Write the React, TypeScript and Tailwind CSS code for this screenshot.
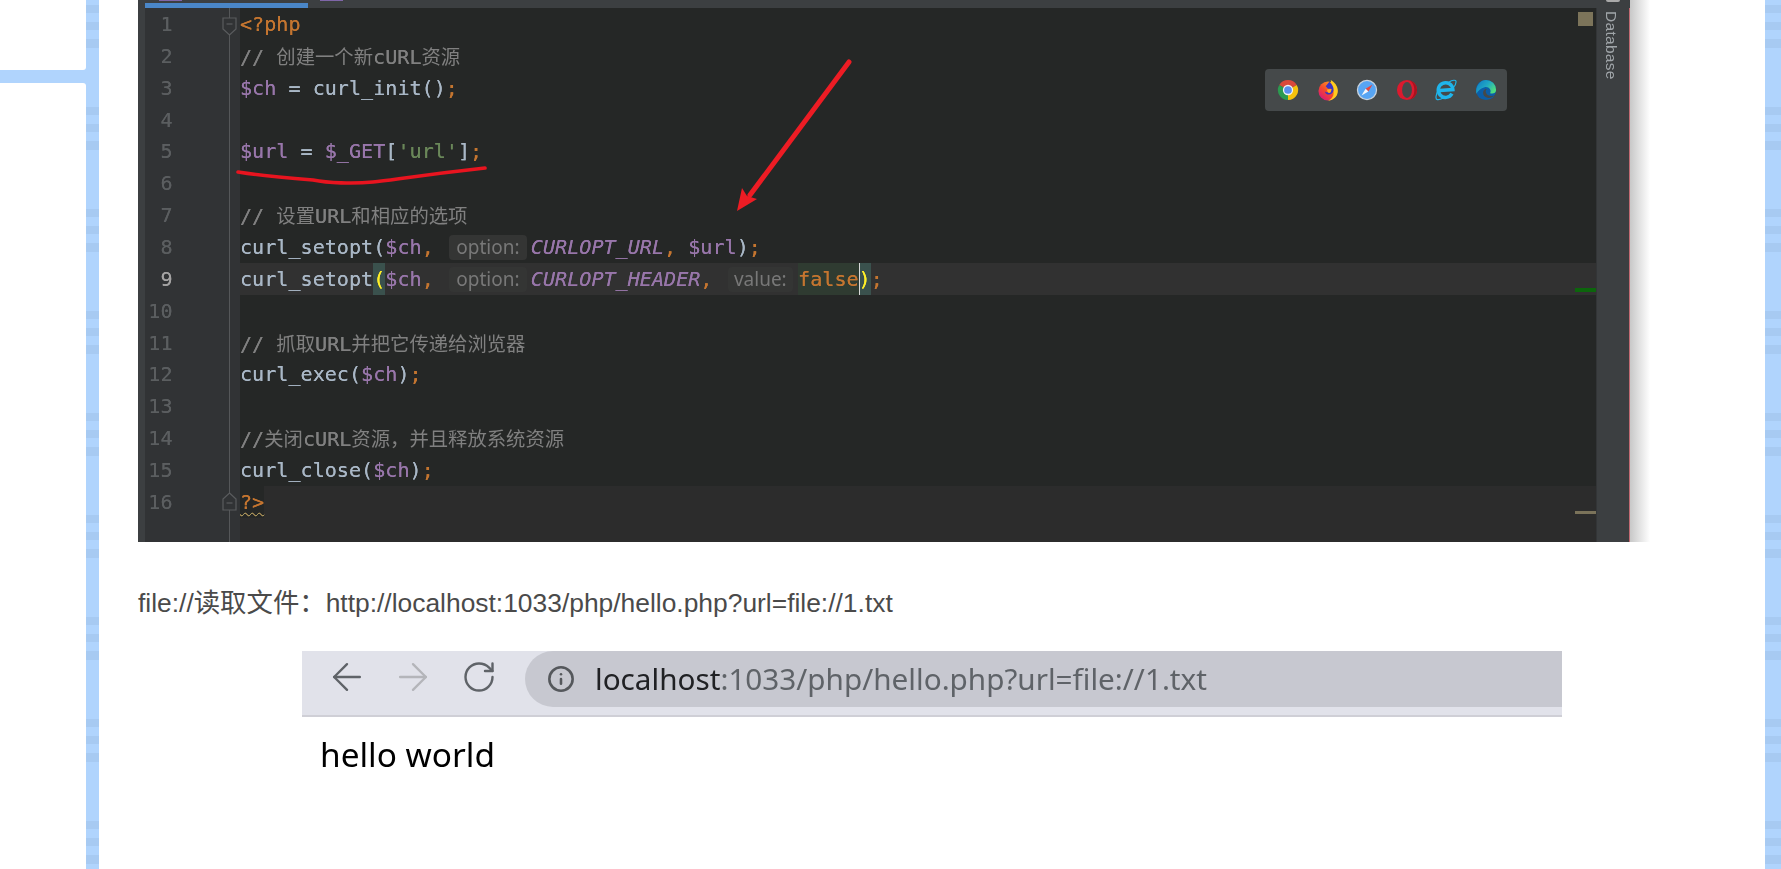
import { ArrowLeft, ArrowRight, RotateCw, Info } from "lucide-react";
import type { ReactNode } from "react";

const stripe =
  "bg-[#b0d4fd] bg-[linear-gradient(to_bottom,#a7caf2_0,#a7caf2_8px,transparent_8px,transparent_17px,#a7caf2_17px,#a7caf2_25px,transparent_25px,transparent_34px,#a7caf2_34px,#a7caf2_43px,transparent_43px)] bg-[length:100%_102px] bg-[position:0_5px]";

const V = ({ children }: { children: ReactNode }) => <span className="text-[#9876aa]">{children}</span>;
const O = ({ children }: { children: ReactNode }) => <span className="text-[#c47530]">{children}</span>;
const C = ({ children }: { children: ReactNode }) => <span className="text-[#808080]">{children}</span>;
const Z = ({ children }: { children: ReactNode }) => (
  <span className="text-[#808080] text-[19.35px] font-['Noto_Sans_CJK_SC',sans-serif] [text-shadow:none]">{children}</span>
);
const K = ({ children }: { children: ReactNode }) => <span className="text-[#9876aa] italic">{children}</span>;
const Hint = ({ w, ml, mr, children }: { w: string; ml: string; mr: string; children: ReactNode }) => (
  <span
    className={`inline-block h-[25px] align-top mt-[4px] rounded-[4px] bg-[#343534] text-[#787878] text-[19px] leading-[25px] text-center font-['Noto_Sans',sans-serif] [text-shadow:none] ${w} ${ml} ${mr}`}
  >
    {children}
  </span>
);

const lines: { code: ReactNode; kind?: "cur" | "end" }[] = [
  { code: <O>{"<?php"}</O> },
  { code: <><C>{"// "}</C><Z>创建一个新</Z><C>cURL</C><Z>资源</Z></> },
  { code: <><V>$ch</V> = curl_init()<O>;</O></> },
  { code: "" },
  { code: <><V>$url</V> = <V>$_GET</V>[<span className="text-[#6a8759]">'url'</span>]<O>;</O></> },
  { code: "" },
  { code: <><C>{"// "}</C><Z>设置</Z><C>URL</C><Z>和相应的选项</Z></> },
  {
    code: (
      <>
        curl_setopt(<V>$ch</V><O>,</O>{" "}
        <Hint w="w-[78px]" ml="ml-[3px]" mr="mr-[4px]">option:</Hint>
        <K>CURLOPT_URL</K><O>,</O> <V>$url</V>)<O>;</O>
      </>
    ),
  },
  {
    kind: "cur",
    code: (
      <>
        curl_setopt
        <span className="inline-block align-top h-[31.87px] bg-[#3a514d] text-[#ffef28]">(</span>
        <V>$ch</V><O>,</O>{" "}
        <Hint w="w-[78px]" ml="ml-[3px]" mr="mr-[4px]">option:</Hint>
        <K>CURLOPT_HEADER</K><O>,</O>{" "}
        <Hint w="w-[64.5px]" ml="ml-[3.5px]" mr="mr-[5.5px]">value:</Hint>
        <span className="inline-block align-top h-[31.87px] bg-[#2f3b31] text-[#c47530]">false</span>
        <span className="inline-block align-top h-[31.87px] bg-[#3a514d] text-[#ffef28] shadow-[inset_1px_0_0_#d8d8d8]">)</span>
        <O>;</O>
      </>
    ),
  },
  { code: "" },
  { code: <><C>{"// "}</C><Z>抓取</Z><C>URL</C><Z>并把它传递给浏览器</Z></> },
  { code: <>curl_exec(<V>$ch</V>)<O>;</O></> },
  { code: "" },
  { code: <><C>{"//"}</C><Z>关闭</Z><C>cURL</C><Z>资源，并且释放系统资源</Z></> },
  { code: <>curl_close(<V>$ch</V>)<O>;</O></> },
  {
    kind: "end",
    code: (
      <span className="inline-block align-top h-[31.87px] bg-[#252726] text-[#c47530] underline decoration-wavy decoration-[#a5a068] decoration-1 underline-offset-[3px]">
        {"?>"}
      </span>
    ),
  },
];

function Browsers() {
  return (
    <>
      <svg viewBox="0 0 24 24" className="w-[22px] h-[22px]">
        <path d="M12 12L2.47 6.5A11 11 0 0 1 21.53 6.5Z" fill="#d9483b" />
        <path d="M12 12L21.53 6.5A11 11 0 0 1 12 23Z" fill="#f4c20d" />
        <path d="M12 12L12 23A11 11 0 0 1 2.47 6.5Z" fill="#2c9a50" />
        <circle cx="12" cy="12" r="5.6" fill="#f2f2f2" />
        <circle cx="12" cy="12" r="4.2" fill="#5a8fef" />
      </svg>
      <svg viewBox="0 0 24 24" className="w-[22px] h-[22px]">
        <defs>
          <linearGradient id="ffx" x1="0.85" y1="0.1" x2="0.2" y2="0.95">
            <stop offset="0" stopColor="#ff9d1f" />
            <stop offset="0.55" stopColor="#f4492c" />
            <stop offset="1" stopColor="#d9177a" />
          </linearGradient>
        </defs>
        <circle cx="12" cy="13" r="10.4" fill="url(#ffx)" />
        <path d="M15 1C21 4.500 23.500 10 22.500 15C21.500 20 17 23.500 12 23.500C16 22 19 18 18 13C17.500 9 15 6 15 1Z" fill="#ffcb1e" />
        <path d="M13.500 3L9.500 8L12 10.500L15.500 10.500L15 13C13 15 11 15 8.500 13.500C10 18.500 17 18 18 12.500C18.500 8.500 16 5.500 13.500 3Z" fill="#3a34c4" />
        <path d="M11 11.500L16 11L15 14.500C13 16 11 15 11 11.500Z" fill="#ffb01f" />
      </svg>
      <svg viewBox="0 0 24 24" className="w-[22px] h-[22px]">
        <circle cx="12" cy="12" r="10.4" fill="#57a5f4" stroke="#c8d2dd" strokeWidth="1.4" />
        <path d="M18 6L10.500 10.500L13.500 13.500Z" fill="#e8453c" />
        <path d="M6 18L10.500 10.500L13.500 13.500Z" fill="#f3f6fa" />
      </svg>
      <svg viewBox="0 0 24 24" className="w-[22px] h-[22px]">
        <circle cx="12" cy="12" r="11" fill="#dc1a2e" />
        <path d="M12 1A11 11 0 0 1 12 23C17 23 20 18 20 12C20 6 17 1 12 1Z" fill="#a8131f" />
        <ellipse cx="12" cy="12" rx="5.4" ry="8.6" fill="#45494a" />
      </svg>
      <svg viewBox="0 0 24 24" className="w-[22px] h-[22px]">
        <path d="M18.500 16A8 8 0 1 1 19.500 11.500L5 12.500" fill="none" stroke="#1fb5ec" strokeWidth="3.8" />
        <path d="M4 11C1 17 0 22 2.500 22.500C6 23 9 20.500 10 20M15 3.500C19 1 23 0.500 23 3C23 5.500 21.500 8 19.500 10" fill="none" stroke="#1fb5ec" strokeWidth="1.3" />
      </svg>
      <svg viewBox="0 0 24 24" className="w-[22px] h-[22px]">
        <defs>
          <linearGradient id="edg" x1="0" y1="0" x2="1" y2="0.6">
            <stop offset="0" stopColor="#0f78c4" />
            <stop offset="0.55" stopColor="#1fa6c4" />
            <stop offset="1" stopColor="#4fdc80" />
          </linearGradient>
        </defs>
        <circle cx="12" cy="12" r="11" fill="#0b5ea8" />
        <path d="M12 1A11 11 0 0 1 23 12C23 15.500 19.500 16.500 16.500 15.500C18.500 12 15 8 10.500 9C6.500 10 3 13 1.500 16C0 8 5.500 1 12 1Z" fill="url(#edg)" />
        <path d="M10 12C8 14 8.500 18 12 20C15 21.500 19 20.500 21 18C18 19 13 18.500 12 15C11.500 13.500 11.500 12 13 11C12 10.500 11 11 10 12Z" fill="#45494a" />
      </svg>
    </>
  );
}

function Editor() {
  return (
    <div className="relative w-[1492px] h-[542px] shrink-0 flex flex-col bg-[#252726] blur-[0.5px] overflow-hidden font-['DejaVu_Sans_Mono','Noto_Sans_CJK_SC',monospace] text-[20.13px] text-[#a9b7c6] [text-shadow:0_0_0.6px_currentColor]">
      <div className="h-[8px] shrink-0 bg-[#3c3f41] pt-[3px] pl-[7px]">
        <div className="w-[163px] h-[5px] bg-[#4a86c7]" />
      </div>
      <div className="flex-1 flex min-h-0">
        <div className="w-[7px] shrink-0 bg-[#3c3f41]" />
        <div className="flex-1 flex flex-col min-w-0">
          {lines.map((l, i) => (
            <div key={i} className={`flex ${l.kind === "end" ? "flex-1" : "h-[31.87px] shrink-0"}`}>
              <div
                className={`w-[84.500px] shrink-0 pr-[56px] text-right border-r border-[#555759] bg-[#313335] leading-[33.87px] ${
                  l.kind === "cur" ? "text-[#a4a3a3]" : "text-[#5b5e60]"
                }`}
              >
                {i + 1}
              </div>
              <div className="w-[10.500px] shrink-0 bg-[#313335]" />
              <div
                className={`flex-1 min-w-0 whitespace-pre leading-[33.87px] ${
                  l.kind === "cur" ? "bg-[#313131]" : l.kind === "end" ? "bg-[#2c2c2c]" : ""
                }`}
              >
                {l.code}
              </div>
            </div>
          ))}
        </div>
        <div className="w-[34px] shrink-0 bg-[#3c3f41] border-l border-[#333537] border-r-[1.500px] border-r-[#c26a72] pl-[4px] pt-[3px]">
          <div className="text-[15.5px] leading-[20px] tracking-[0.3px] text-[#a0a5a9] [text-shadow:none] [writing-mode:vertical-rl] font-['Liberation_Sans',sans-serif]">
            Database
          </div>
        </div>
      </div>

      <div className="absolute left-[21px] top-0 w-[23px] h-[1px] bg-[#7f66a8]" />
      <div className="absolute left-[182px] top-0 w-[23px] h-[1px] bg-[#7f66a8]" />
      <div className="absolute left-[1468px] top-0 w-[14px] h-[2px] rounded-b-full bg-[#a9a9a9]" />
      <div className="absolute left-[1440px] top-[12px] w-[14.500px] h-[14px] bg-[#7c745a]" />
      <div className="absolute left-[1437px] top-[288px] w-[21px] h-[3.500px] bg-[#0c650c]" />
      <div className="absolute left-[1437px] top-[511px] w-[21px] h-[3px] bg-[#7b735a]" />

      <div className="absolute left-[1127px] top-[69px] w-[242px] h-[42px] rounded-[4px] bg-[#45494a] flex items-center pl-[12px] gap-[17.600px]">
        <Browsers />
      </div>

      <svg viewBox="0 0 1492 542" className="absolute inset-0 w-[1492px] h-[542px] pointer-events-none">
        <path d="M85 18H98V29L91.500 35L85 29Z" fill="#313335" stroke="#5a5c5e" strokeWidth="1.200" />
        <path d="M88.500 24H94.500" stroke="#5a5c5e" strokeWidth="1.200" />
        <path d="M91.500 493L98 499V510H85V499Z" fill="#313335" stroke="#5a5c5e" strokeWidth="1.200" />
        <path d="M88.500 503H94.500" stroke="#5a5c5e" strokeWidth="1.200" />
        <path d="M100 172C125 176 150 178 175 180C190 183 215 184 235 182C255 180 275 176 347 168" fill="none" stroke="#e8141f" strokeWidth="3.600" strokeLinecap="round" />
        <path d="M711 62L612 195" fill="none" stroke="#ed1c24" strokeWidth="5" strokeLinecap="round" />
        <path d="M599 211L604 188L609 196L619 199Z" fill="#ed1c24" />
      </svg>
    </div>
  );
}

export default function App() {
  return (
    <div className="w-full h-screen overflow-hidden flex bg-white">
      <div className={`w-[99px] shrink-0 h-full flex ${stripe}`}>
        <div className="w-[86px] h-full flex flex-col">
          <div className="h-[70px] bg-white rounded-br-[3px]" />
          <div className="h-[13px]" />
          <div className="flex-1 bg-white rounded-tr-[3px]" />
        </div>
      </div>

      <main className="flex-1 min-w-0 pl-[39px] bg-white overflow-hidden">
        <div className="flex">
          <Editor />
          <div className="w-[20px] h-[542px] bg-gradient-to-r from-[#c8c8c8] to-white" />
        </div>

        <p className="mt-[41px] h-[40px] leading-[40px] text-[26.4px] text-[#4a4a4a] whitespace-pre font-['Liberation_Sans','Noto_Sans_CJK_SC',sans-serif]">
          file://读取文件：http://localhost:1033/php/hello.php?url=file://1.txt
        </p>

        <div className="mt-[28px] ml-[164px] w-[1260px] blur-[0.3px]">
          <div className="h-[66px] bg-[#e1e2ea] border-b-2 border-[#cfcfd6] flex items-start">
            <div className="w-[223px] h-[64px] shrink-0 flex items-center pl-[23px] gap-[22px] pb-[12px]">
              <ArrowLeft className="w-[44px] h-[44px] text-[#5f6368]" strokeWidth={1.3} />
              <ArrowRight className="w-[44px] h-[44px] text-[#b4b5ba]" strokeWidth={1.3} />
              <RotateCw className="w-[36px] h-[36px] ml-[4px] text-[#5f6368]" strokeWidth={1.6} />
            </div>
            <div className="flex-1 h-[56px] rounded-l-[28px] bg-[#c7c8d0] flex items-center pl-[22px] gap-[20px]">
              <Info className="w-[28px] h-[28px] text-[#55585c]" strokeWidth={2.2} />
              <span className="text-[29.7px] text-[#5f6368] whitespace-pre font-['Noto_Sans',sans-serif]">
                <span className="text-[#202124]">localhost</span>:1033/php/hello.php?url=file://1.txt
              </span>
            </div>
          </div>
          <div className="pl-[18px] pt-[15px] text-[33.4px] leading-[44px] text-[#000000] font-['Noto_Sans',sans-serif]">
            hello world
          </div>
        </div>
      </main>

      <div className={`w-[16px] shrink-0 h-full ${stripe}`} />
    </div>
  );
}
